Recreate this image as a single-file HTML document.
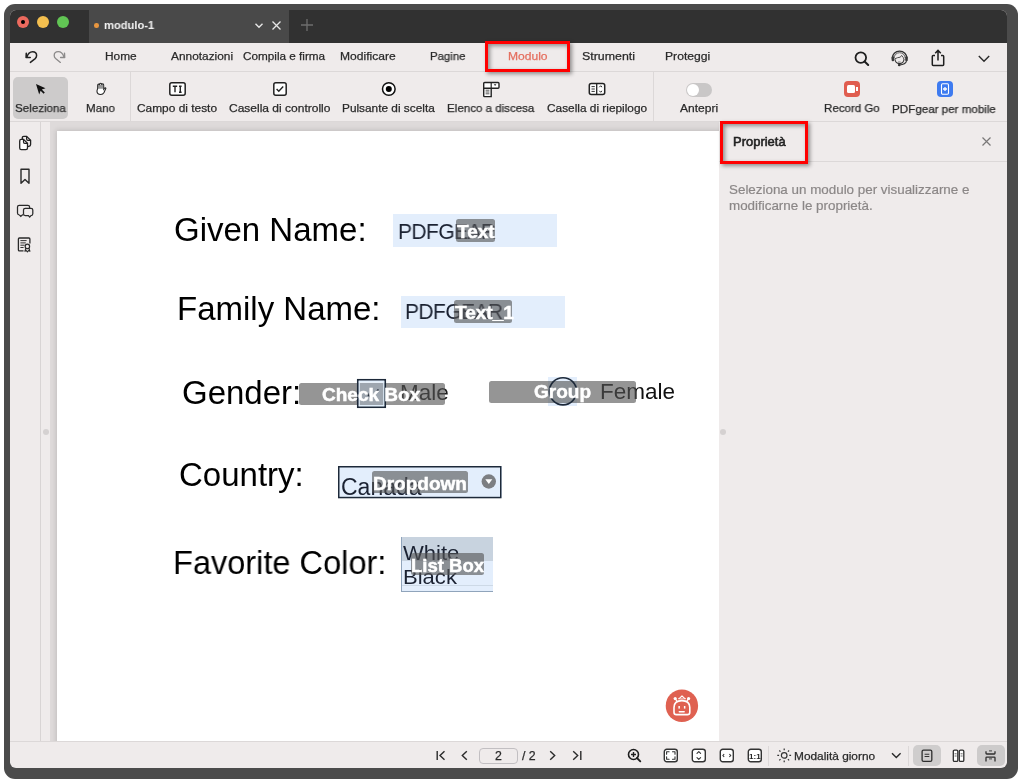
<!DOCTYPE html>
<html><head><meta charset="utf-8">
<style>
html,body{margin:0;padding:0;}
body{width:1018px;height:779px;overflow:hidden;background:#fff;position:relative;font-family:"Liberation Sans",sans-serif;}
.a{position:absolute;}
.t{position:absolute;white-space:nowrap;line-height:1;will-change:transform;transform-origin:0 0;}
svg{position:absolute;overflow:visible;will-change:transform;}
.ui{font-size:11.7px;color:#2a2a2a;-webkit-text-stroke-width:0.25px;}
.pg{font-size:33px;color:#000;}
.fv{font-size:22px;color:#1b2232;letter-spacing:-0.6px;transform:scale(0.955,1.0);}
.tag{position:absolute;background:rgba(84,84,84,0.62);border-radius:2.5px;}
.tagt{position:absolute;white-space:nowrap;line-height:1;will-change:transform;font-size:19px;font-weight:bold;color:#fff;-webkit-text-stroke:0.5px #fff;}
</style></head><body>
<!-- frame -->
<div class="a" style="left:4px;top:4px;width:1014px;height:775px;background:#4b4b4b;border-radius:11px;"></div>
<!-- window -->
<div class="a" style="left:10px;top:10px;width:997px;height:758px;background:#efebeb;border-radius:6px;overflow:hidden;">
  <div class="a" style="left:0;top:0;width:997px;height:33px;background:#313131;"></div>
  <div class="a" style="left:79px;top:0;width:200px;height:33px;background:#494949;"></div>
</div>

<!-- traffic lights -->
<div class="a" style="left:17px;top:16px;width:12px;height:12px;border-radius:50%;background:#ec6a5e;"></div>
<div class="a" style="left:21px;top:20px;width:4px;height:4px;border-radius:50%;background:#000;"></div>
<div class="a" style="left:37px;top:16px;width:12px;height:12px;border-radius:50%;background:#f4bf4f;"></div>
<div class="a" style="left:57px;top:16px;width:12px;height:12px;border-radius:50%;background:#61c554;"></div>

<!-- tab -->
<div class="a" style="left:94.2px;top:23.4px;width:4.6px;height:4.6px;border-radius:50%;background:#e8963f;"></div>
<div class="t" style="left:103.5px;top:19.5px;font-size:11.5px;font-weight:bold;color:#f2f2f2;transform:scaleX(0.97);">modulo-1</div>
<svg style="left:255px;top:23px" width="8" height="6"><path d="M0.5 0.8 L4 4.3 L7.5 0.8" fill="none" stroke="#e6e6e6" stroke-width="1.4"/></svg>
<svg style="left:272px;top:21.3px" width="9" height="9"><path d="M0.5 0.5 L8.5 8.5 M8.5 0.5 L0.5 8.5" fill="none" stroke="#e6e6e6" stroke-width="1.3"/></svg>
<svg style="left:301px;top:19px" width="12" height="12"><path d="M6 0 V12 M0 6 H12" fill="none" stroke="#6e6e6e" stroke-width="1.3"/></svg>

<!-- menu bar -->
<div class="a" style="left:10px;top:71px;width:997px;height:1px;background:#dcd8d8;"></div>
<svg style="left:20px;top:46px" width="50" height="22"><path d="M6.8 11.2 Q8.5 5.7 12.6 5.7 Q16.6 5.7 16.6 9.6 Q16.6 11.4 15.2 12.6 L10.4 16.4" fill="none" stroke="#222" stroke-width="1.5" stroke-linecap="round"/><path d="M6.3 7.2 L6.1 11.5 L10.2 11.5" fill="none" stroke="#222" stroke-width="1.6" stroke-linecap="round" stroke-linejoin="round"/>
<path d="M44 11.2 Q42.3 5.7 38.2 5.7 Q34.2 5.7 34.2 9.6 Q34.2 11.4 35.6 12.6 L40.4 16.4" fill="none" stroke="#8c8a8a" stroke-width="1.3" stroke-linecap="round"/><path d="M44.5 7.2 L44.7 11.5 L40.6 11.5" fill="none" stroke="#8c8a8a" stroke-width="1.4" stroke-linecap="round" stroke-linejoin="round"/></svg>
<div class="t ui" style="left:104.7px;top:49.9px;transform:scaleX(1.0167);">Home</div>
<div class="t ui" style="left:170.5px;top:49.9px;transform:scaleX(1.0167);">Annotazioni</div>
<div class="t ui" style="left:243.0px;top:49.9px;transform:scaleX(1.0037);">Compila e firma</div>
<div class="t ui" style="left:339.6px;top:49.9px;transform:scaleX(1.032);">Modificare</div>
<div class="t ui" style="left:429.7px;top:49.9px;transform:scaleX(0.974);">Pagine</div>
<div class="t ui" style="left:507.7px;top:49.9px;transform:scaleX(1.032);color:#e46f5f;">Modulo</div>
<div class="t ui" style="left:581.6px;top:49.9px;transform:scaleX(1.06);">Strumenti</div>
<div class="t ui" style="left:664.9px;top:49.9px;transform:scaleX(1.038);">Proteggi</div>

<!-- menu right icons -->
<svg style="left:854px;top:51px" width="16" height="16"><circle cx="6.8" cy="6.6" r="5.3" fill="none" stroke="#1e1e1e" stroke-width="1.8"/><path d="M10.6 10.5 L14.2 14" stroke="#1e1e1e" stroke-width="2" stroke-linecap="round"/></svg>
<svg style="left:885px;top:46px" width="30" height="24"><path d="M7.2 12.5 A7.4 7.4 0 0 1 22 12.5" fill="none" stroke="#333" stroke-width="1.4"/><path d="M9 12.3 A5.6 5.6 0 0 1 20.2 12.3" fill="none" stroke="#555" stroke-width="0.9"/><rect x="6.6" y="10.3" width="2.6" height="5" rx="1.2" fill="#3a3a3a"/><rect x="20.2" y="10.3" width="2.6" height="5" rx="1.2" fill="#3a3a3a"/><path d="M10 13.3 Q10.3 17.6 14.5 17.6 Q18.7 17.6 19 13.3" fill="none" stroke="#333" stroke-width="1.1"/><path d="M9.8 12.8 Q12.5 11.4 15.3 11.2 L16.6 9.4 Q18.6 11.2 19 13.5" fill="none" stroke="#444" stroke-width="0.9"/><path d="M21.5 15.2 Q20.5 18.6 14.6 19" fill="none" stroke="#333" stroke-width="1.1"/><circle cx="14.2" cy="19" r="1.3" fill="#333"/><path d="M13 16 H15.6" stroke="#666" stroke-width="0.8"/></svg>
<svg style="left:931px;top:49px" width="14" height="18"><path d="M4 6.5 H2.2 Q1.3 6.5 1.3 7.5 V15.5 Q1.3 16.5 2.2 16.5 H11.8 Q12.7 16.5 12.7 15.5 V7.5 Q12.7 6.5 11.8 6.5 H10" fill="none" stroke="#1e1e1e" stroke-width="1.5"/><path d="M7 11.5 V1.5 M4.2 4.2 L7 1.4 L9.8 4.2" fill="none" stroke="#1e1e1e" stroke-width="1.5"/></svg>
<svg style="left:978px;top:55px" width="12" height="8"><path d="M0.8 1 L6 6.3 L11.2 1" fill="none" stroke="#2a2a2a" stroke-width="1.4"/></svg>

<!-- toolbar -->
<div class="a" style="left:10px;top:121px;width:997px;height:1px;background:#dcd8d8;"></div>
<div class="a" style="left:13px;top:77px;width:55px;height:42px;background:#cdcbcb;border-radius:5px;"></div>
<div class="a" style="left:130px;top:72px;width:1px;height:49px;background:#dcd8d8;"></div>
<div class="a" style="left:653px;top:72px;width:1px;height:49px;background:#dcd8d8;"></div>

<!-- cursor -->
<svg style="left:35px;top:83px" width="12" height="13"><path d="M1 1 L10.5 5.2 L6.8 6.6 L9.8 9.6 L8.6 10.8 L5.6 7.8 L4.2 11.4 Z" fill="#111"/></svg>
<!-- hand -->
<svg style="left:95.3px;top:82.4px" width="11.5" height="13.5" viewBox="0 0 13 15"><path d="M3 7 V3.5 Q3 2.3 4.2 2.3 Q5.2 2.3 5.2 3.5 V2.4 Q5.2 1.2 6.4 1.2 Q7.5 1.2 7.5 2.4 V3.2 Q7.5 2 8.7 2 Q9.8 2 9.8 3.2 V8 L10.8 6.8 Q11.8 6 12.3 7 L10.2 11.8 Q9 14 6.5 14 Q2.2 14 2.2 10 Z" fill="#fff" stroke="#222" stroke-width="1.2"/><path d="M3.2 3 H9.6 V7.5 H3.2Z" fill="#6a6a6a" opacity="0.7"/></svg>
<!-- TI -->
<svg style="left:169px;top:82px" width="17" height="14"><rect x="0.8" y="0.8" width="15.4" height="12.4" rx="2" fill="#fff" stroke="#222" stroke-width="1.5"/><path d="M3.8 4.2 H8.2 M6 4.2 V10.2 M10 4.2 H12.6 M11.3 4.2 V10.2 M10 10.2 H12.6" stroke="#222" stroke-width="1.4"/></svg>
<!-- checkbox -->
<svg style="left:273px;top:82px" width="14" height="14"><rect x="0.8" y="0.8" width="12.4" height="12.4" rx="2" fill="#fff" stroke="#222" stroke-width="1.5"/><path d="M3.6 7 L5.8 9.2 L10.2 4.6" fill="none" stroke="#222" stroke-width="1.4"/></svg>
<!-- radio -->
<svg style="left:381px;top:81px" width="16" height="16"><circle cx="7.8" cy="8" r="6.3" fill="#fff" stroke="#111" stroke-width="1.5"/><circle cx="7.8" cy="8" r="3" fill="#000"/></svg>
<!-- dropdown -->
<svg style="left:482px;top:81px" width="18" height="17"><path d="M1.7 7.2 V14.8 Q1.7 15.6 2.5 15.6 H9.2 V7.2 Z" fill="#fff" stroke="#222" stroke-width="1.4"/><rect x="1.7" y="1.5" width="15.3" height="5.7" rx="1" fill="#fff" stroke="#222" stroke-width="1.4"/><path d="M9.2 1.5 V7.2" stroke="#222" stroke-width="1.2"/><path d="M11.8 3.3 H14.4 L13.1 5 Z" fill="#222"/><path d="M3.6 9.2 H7.4 M3.6 11 H7.4 M3.6 12.8 H7.4" stroke="#444" stroke-width="0.9"/></svg>
<!-- listbox -->
<svg style="left:588px;top:82px" width="18" height="14"><rect x="1.3" y="1.5" width="15.4" height="11" rx="2" fill="#fff" stroke="#222" stroke-width="1.5"/><path d="M8.7 1.5 V12.5" stroke="#222" stroke-width="1.3"/><path d="M3.5 4.6 H6.8 M3.5 7 H6.8 M3.5 9.4 H6.8" stroke="#333" stroke-width="1"/><path d="M11.3 5.2 L12.7 3.8 L14.1 5.2 M11.3 8.8 L12.7 10.2 L14.1 8.8" fill="none" stroke="#222" stroke-width="1"/></svg>
<!-- toggle -->
<div class="a" style="left:686px;top:83px;width:26px;height:14px;border-radius:7px;background:#c9c7c7;"></div>
<div class="a" style="left:687px;top:84px;width:12px;height:12px;border-radius:50%;background:#fff;"></div>
<!-- record go -->
<div class="a" style="left:844px;top:81px;width:16px;height:16px;border-radius:4px;background:#e05d4f;"></div>
<div class="a" style="left:847px;top:85px;width:8px;height:8px;border-radius:1.5px;background:#fff;"></div>
<div class="a" style="left:856px;top:87px;width:2px;height:4px;background:#fff;"></div>
<!-- pdfgear mobile -->
<div class="a" style="left:937px;top:81px;width:16px;height:16px;border-radius:4px;background:#3e7bf0;"></div>
<svg style="left:940px;top:83px" width="10" height="12"><rect x="1.5" y="0.8" width="7" height="10.4" rx="1.2" fill="none" stroke="#fff" stroke-width="1.1"/><path d="M5 4 V8 M3 6 H7" stroke="#fff" stroke-width="1.3"/></svg>

<div class="t ui" style="left:14.7px;top:102px;transform:scaleX(0.99);">Seleziona</div>
<div class="t ui" style="left:86.3px;top:102px;transform:scaleX(0.99);">Mano</div>
<div class="t ui" style="left:136.8px;top:102px;transform:scaleX(1.018);">Campo di testo</div>
<div class="t ui" style="left:229.0px;top:102px;transform:scaleX(1.027);">Casella di controllo</div>
<div class="t ui" style="left:341.8px;top:102px;transform:scaleX(1.013);">Pulsante di scelta</div>
<div class="t ui" style="left:447.0px;top:102px;transform:scaleX(0.989);">Elenco a discesa</div>
<div class="t ui" style="left:546.8px;top:102px;transform:scaleX(1.014);">Casella di riepilogo</div>
<div class="t ui" style="left:680.3px;top:102px;transform:scaleX(1.03);">Antepri</div>
<div class="t ui" style="left:823.8px;top:101.6px;transform:scaleX(0.986);">Record Go</div>
<div class="t ui" style="left:892.2px;top:102.6px;transform:scaleX(0.993);">PDFgear per mobile</div>

<!-- content area -->
<div class="a" style="left:40px;top:122px;width:1px;height:620px;background:#d8d4d4;"></div>
<div class="a" style="left:50px;top:122px;width:669px;height:620px;background:#dedada;overflow:hidden;"><div class="a" style="left:7px;top:9px;width:700px;height:700px;background:#fff;box-shadow:0 0 5px 1px rgba(0,0,0,0.13);"></div></div>
<div class="a" style="left:43px;top:429px;width:6px;height:6px;border-radius:50%;background:#d5d1d1;"></div>
<div class="a" style="left:720px;top:429px;width:6px;height:6px;border-radius:50%;background:#d5d1d1;"></div>

<!-- sidebar icons -->
<svg style="left:12px;top:132px" width="26" height="24"><path d="M10.3 7.3 V5.8 Q10.3 4.3 11.8 4.3 H14.6 L18.6 8.3 V12.6 Q18.6 14.3 16.9 14.3 H15.6" fill="none" stroke="#222" stroke-width="1.3"/><path d="M14.6 4.3 V7 Q14.6 8.3 15.9 8.3 H18.6" fill="none" stroke="#222" stroke-width="1.2"/><path d="M9.2 7.3 H11.5 L15.5 11.3 V16 Q15.5 17.6 13.9 17.6 H9.3 Q7.7 17.6 7.7 16 V8.9 Q7.7 7.3 9.2 7.3 Z" fill="#fff" stroke="#222" stroke-width="1.3"/><path d="M11.5 7.3 V10 Q11.5 11.3 12.8 11.3 H15.5" fill="none" stroke="#222" stroke-width="1.2"/></svg>
<svg style="left:19px;top:168px" width="12" height="17"><path d="M2 1.3 H10 V15.3 L6 11.5 L2 15.3 Z" fill="none" stroke="#2a2a2a" stroke-width="1.4" stroke-linejoin="round"/></svg>
<svg style="left:12px;top:196px" width="26" height="26"><path d="M7.3 18.8 Q5.5 18.8 5.5 17 V11.1 Q5.5 9.3 7.3 9.3 H15.8 Q17.6 9.3 17.6 11.1 V12.2" fill="none" stroke="#2a2a2a" stroke-width="1.25"/><path d="M7.3 18.8 L8.8 20.4 L10.4 18.8 H11.4" fill="none" stroke="#2a2a2a" stroke-width="1.2"/><path d="M13.3 12.3 H19 Q20.8 12.3 20.8 14.1 V17.8 Q20.8 19.6 19 19.6 L17.7 21.1 L16.4 19.6 H13.3 Q11.5 19.6 11.5 17.8 V14.1 Q11.5 12.3 13.3 12.3 Z" fill="#efebeb" stroke="#2a2a2a" stroke-width="1.25"/></svg>
<svg style="left:12px;top:232px" width="26" height="24"><path d="M11.5 18.9 H7.4 Q6.4 18.9 6.4 17.9 V7 Q6.4 6 7.4 6 H16.9 Q17.9 6 17.9 7 V11.5" fill="none" stroke="#2a2a2a" stroke-width="1.3"/><path d="M8.4 8.6 H14.6 M8.4 10.9 H13.8 M8.4 13.2 H12.6 M8.4 15.5 H11.6" stroke="#333" stroke-width="1"/><circle cx="15.4" cy="14.4" r="2.2" fill="none" stroke="#2a2a2a" stroke-width="1.2"/><path d="M13.9 16.2 L12.9 19.2 L14.3 18.6 L15.4 19.8 L16.5 18.6 L17.9 19.2 L16.9 16.2" fill="none" stroke="#2a2a2a" stroke-width="1.1" stroke-linejoin="round"/></svg>

<!-- page content -->
<div class="t pg" style="left:174px;top:212.7px;">Given Name:</div>
<div class="t pg" style="left:176.6px;top:292.3px;">Family Name:</div>
<div class="t pg" style="left:182px;top:376px;">Gender:</div>
<div class="t pg" style="left:179px;top:457.6px;">Country:</div>
<div class="t pg" style="left:173.4px;top:545.6px;transform:scaleX(0.986);">Favorite Color:</div>

<!-- text fields -->
<div class="a" style="left:393px;top:214px;width:164px;height:33px;background:#e3eefc;"></div>
<div class="t fv" style="left:397.5px;top:220.6px;">PDFGEAR</div>
<div class="tag" style="left:456px;top:219px;width:39px;height:23px;"></div>
<div class="tagt" style="left:457px;top:222.2px;">Text</div>

<div class="a" style="left:401px;top:296px;width:164px;height:32px;background:#e3eefc;"></div>
<div class="t fv" style="left:405px;top:301px;">PDFGEAR</div>
<div class="tag" style="left:454px;top:300px;width:58px;height:23px;"></div>
<div class="tagt" style="left:455px;top:303px;">Text_1</div>

<!-- gender -->
<div class="t" style="left:399.5px;top:382.3px;font-size:22.5px;color:#1c1c1c;">Male</div>
<div class="tag" style="left:299px;top:383px;width:146px;height:22px;"></div>
<svg style="left:356px;top:378px" width="31" height="31"><rect x="1.8" y="1.8" width="27.4" height="27.4" fill="rgba(180,205,235,0.3)" stroke="#1d2939" stroke-width="1.7"/><rect x="3.3" y="3.3" width="24.4" height="24.4" fill="none" stroke="rgba(225,238,252,0.85)" stroke-width="1.2"/><path d="M11 15.5 L15 19.5 L22.5 11.5" fill="none" stroke="#2a3340" stroke-width="1.8"/></svg>
<div class="tagt" style="left:321.5px;top:384.8px;">Check Box</div>

<div class="a" style="left:548px;top:377px;width:29px;height:29px;background:rgba(200,222,250,0.5);"></div>
<div class="t" style="left:599.5px;top:381.2px;font-size:22.5px;color:#111;">Female</div>
<div class="tag" style="left:489px;top:380.5px;width:147px;height:22.5px;"></div>
<svg style="left:548px;top:377px" width="30" height="30"><circle cx="15" cy="14.3" r="13.6" fill="none" stroke="#1d2939" stroke-width="1.6"/></svg>
<div class="tagt" style="left:534px;top:381.6px;">Group</div>

<!-- dropdown -->
<div class="a" style="left:338px;top:465.5px;width:163.5px;height:32.3px;background:#e3eefc;overflow:hidden;">
  <div class="t" style="left:3.3px;top:10.7px;font-size:23px;color:#1b2232;">Canada</div>
</div>
<svg style="left:338px;top:465.5px" width="164" height="33"><rect x="0.75" y="0.75" width="162" height="30.8" fill="none" stroke="#1d2939" stroke-width="1.5"/></svg>
<div class="tag" style="left:372px;top:470.5px;width:96px;height:22.5px;"></div>
<div class="tagt" style="left:372.5px;top:473.5px;">Dropdown</div>
<svg style="left:481px;top:474px" width="16" height="16"><circle cx="7.8" cy="7.5" r="7.2" fill="#7c7e82"/><path d="M4.3 5.3 H11.3 L7.8 10 Z" fill="#fff"/></svg>

<!-- list box -->
<div class="a" style="left:401px;top:537px;width:92px;height:55px;background:#e3eefc;border-left:1px solid #90a4bb;border-bottom:1px solid #90a4bb;box-sizing:border-box;"></div>
<div class="a" style="left:402px;top:537px;width:91px;height:24px;background:#c8d3df;"></div>
<div class="a" style="left:402px;top:585px;width:91px;height:1px;background:#cdd9e6;"></div>
<div class="t" style="left:403px;top:541.5px;font-size:21px;color:#1b2232;transform:scaleX(1.05);">White</div>
<div class="t" style="left:403px;top:566.2px;font-size:21px;color:#1b2232;transform:scaleX(1.05);">Black</div>
<div class="tag" style="left:411px;top:553.3px;width:73px;height:22px;"></div>
<div class="tagt" style="left:411px;top:557.2px;font-size:18.5px;">List Box</div>

<!-- robot -->
<svg style="left:665px;top:689px" width="34" height="34"><circle cx="16.9" cy="16.8" r="16.2" fill="#df6151"/><path d="M9 18.5 Q9 11.6 16.9 11.6 Q24.8 11.6 24.8 18.5 V23.2 Q24.8 25.6 22.4 25.6 H11.4 Q9 25.6 9 23.2 Z" fill="none" stroke="#fff" stroke-width="1.6"/><circle cx="10.2" cy="9.6" r="1.6" fill="#fff"/><circle cx="23.6" cy="9.6" r="1.6" fill="#fff"/><path d="M10.6 10 L12.2 12.6 M23.2 10 L21.6 12.6" stroke="#fff" stroke-width="1.2"/><path d="M13.4 10 L15.2 8.6 L17 7 L18.8 8.6 L20.6 10" fill="none" stroke="#fff" stroke-width="1.2" stroke-linejoin="round"/><path d="M14.2 9.9 H19.8" stroke="#fff" stroke-width="0.8"/><rect x="13.4" y="17" width="1.5" height="2.6" fill="#fff"/><rect x="18.9" y="17" width="1.5" height="2.6" fill="#fff"/><path d="M14.3 22.7 H19.2" stroke="#fff" stroke-width="1.4" stroke-linecap="round"/></svg>

<!-- right panel -->
<div class="a" style="left:719px;top:161px;width:288px;height:1px;background:#dcd8d8;"></div>
<div class="t" style="left:733px;top:135.5px;font-size:12.6px;color:#222;-webkit-text-stroke:0.55px #222;transform:scaleX(1.03);">Proprietà</div>
<svg style="left:982px;top:137px" width="9" height="9"><path d="M0.5 0.5 L8.5 8.5 M8.5 0.5 L0.5 8.5" fill="none" stroke="#7a7878" stroke-width="1.2"/></svg>
<div class="t" style="left:729.3px;top:182px;font-size:13.4px;color:#8b8787;line-height:16px;-webkit-text-stroke:0.2px #8b8787;">Seleziona un modulo per visualizzarne e<br>modificarne le proprietà.</div>

<!-- bottom bar -->
<div class="a" style="left:10px;top:741px;width:997px;height:1px;background:#dcd8d8;"></div>
<svg style="left:436px;top:750px" width="10" height="11"><path d="M1.2 1 V10" stroke="#2a2a2a" stroke-width="1.4"/><path d="M8.5 1.2 L4 5.5 L8.5 9.8" fill="none" stroke="#2a2a2a" stroke-width="1.4"/></svg>
<svg style="left:460px;top:750px" width="8" height="11"><path d="M6.8 1.2 L2.3 5.5 L6.8 9.8" fill="none" stroke="#2a2a2a" stroke-width="1.4"/></svg>
<div class="a" style="left:479px;top:747.5px;width:39px;height:16px;border:1px solid #c2bfc2;border-radius:4px;box-sizing:border-box;"></div>
<div class="t ui" style="left:494.8px;top:749.5px;font-size:12.3px;">2</div>
<div class="t ui" style="left:521.5px;top:749.5px;font-size:12.3px;">/ 2</div>
<svg style="left:549px;top:750px" width="8" height="11"><path d="M1.2 1.2 L5.7 5.5 L1.2 9.8" fill="none" stroke="#2a2a2a" stroke-width="1.4"/></svg>
<svg style="left:572px;top:750px" width="10" height="11"><path d="M1.2 1.2 L5.7 5.5 L1.2 9.8" fill="none" stroke="#2a2a2a" stroke-width="1.4"/><path d="M8.8 1 V10" stroke="#2a2a2a" stroke-width="1.4"/></svg>
<svg style="left:627px;top:748px" width="15" height="15"><circle cx="6.5" cy="6.5" r="5" fill="none" stroke="#1e1e1e" stroke-width="1.6"/><path d="M10 10 L13.3 13.3" stroke="#1e1e1e" stroke-width="1.8" stroke-linecap="round"/><path d="M6.5 4 V9 M4 6.5 H9" stroke="#1e1e1e" stroke-width="1.4"/></svg>
<svg style="left:663px;top:748px" width="16" height="15"><rect x="1.3" y="1.3" width="13" height="12.4" rx="2.5" fill="#fff" stroke="#333" stroke-width="1.4"/><path d="M3.6 6.3 V3.8 H6.1 M9.5 3.8 H12 V6.3 M12 8.7 V11.2 H9.5 M6.1 11.2 H3.6 V8.7" fill="none" stroke="#333" stroke-width="1.1" stroke-linecap="round" stroke-linejoin="round"/></svg>
<svg style="left:691px;top:748px" width="16" height="15"><rect x="1.3" y="1.3" width="13" height="12.4" rx="2.5" fill="#fff" stroke="#333" stroke-width="1.4"/><path d="M6 5.3 L7.8 3.6 L9.6 5.3 M6 9.7 L7.8 11.4 L9.6 9.7" fill="none" stroke="#333" stroke-width="1.1" stroke-linecap="round" stroke-linejoin="round"/></svg>
<svg style="left:719px;top:748px" width="16" height="15"><rect x="1.3" y="1.3" width="13" height="12.4" rx="2.5" fill="#fff" stroke="#333" stroke-width="1.4"/><path d="M5.2 6 L3.9 7.5 L5.2 9 M10.4 6 L11.7 7.5 L10.4 9" fill="none" stroke="#333" stroke-width="1.1"/></svg>
<svg style="left:747px;top:748px" width="16" height="15"><rect x="1.3" y="1.3" width="13" height="12.4" rx="2.5" fill="#fff" stroke="#333" stroke-width="1.4"/><text x="7.8" y="10.8" font-size="8" font-weight="bold" font-family="Liberation Sans" text-anchor="middle" fill="#222">1:1</text></svg>
<div class="a" style="left:768px;top:746px;width:1px;height:20px;background:#dcd8d8;"></div>
<svg style="left:777px;top:748px" width="15" height="15"><circle cx="7.2" cy="7.4" r="2.8" fill="none" stroke="#333" stroke-width="1.2"/><path d="M7.2 0.5 V2.3 M7.2 12.5 V14.3 M0.3 7.4 H2.1 M12.3 7.4 H14.1 M2.3 2.5 L3.5 3.7 M10.9 11.1 L12.1 12.3 M2.3 12.3 L3.5 11.1 M10.9 3.7 L12.1 2.5" stroke="#333" stroke-width="1.2"/></svg>
<div class="t ui" style="left:793.8px;top:749.7px;transform:scaleX(1.015);">Modalità giorno</div>
<svg style="left:891px;top:752px" width="11" height="8"><path d="M1 1.3 L5.3 5.6 L9.6 1.3" fill="none" stroke="#2a2a2a" stroke-width="1.4"/></svg>
<div class="a" style="left:908px;top:746px;width:1px;height:20px;background:#dcd8d8;"></div>
<div class="a" style="left:913px;top:745px;width:28px;height:21px;background:#cfcdcd;border-radius:5px;"></div>
<svg style="left:920px;top:748px" width="14" height="15"><rect x="2.1" y="2.1" width="9.7" height="11.3" rx="1.4" fill="none" stroke="#2e2e2e" stroke-width="1.3"/><path d="M4.6 6.2 H9.3 M4.6 8.5 H9.3" stroke="#333" stroke-width="1.1"/></svg>
<svg style="left:950px;top:748px" width="16" height="15"><rect x="3.3" y="2.1" width="4.5" height="11.3" rx="1.2" fill="#fff" stroke="#2e2e2e" stroke-width="1.3"/><rect x="9.3" y="2.1" width="4.5" height="11.3" rx="1.2" fill="#fff" stroke="#2e2e2e" stroke-width="1.3"/><path d="M4.6 5.8 H6.6 M4.6 8 H6.6 M10.6 5.8 H12.6 M10.6 8 H12.6" stroke="#555" stroke-width="0.9"/></svg>
<div class="a" style="left:977px;top:745px;width:28px;height:21px;background:#cdcbcb;border-radius:5px;"></div>
<svg style="left:984px;top:748px" width="14" height="15"><path d="M2 3.2 V5.3 Q2 6 2.8 6 H10.2 Q11 6 11 5.3 V3.2 M2 13.6 V9.8 Q2 9.1 2.8 9.1 H10.2 Q11 9.1 11 9.8 V13.6" fill="none" stroke="#2e2e2e" stroke-width="1.3"/><path d="M5 2.9 H8 M5 10.9 H8" stroke="#444" stroke-width="1"/></svg>

<!-- red highlight boxes -->
<div class="a" style="left:485px;top:41px;width:79px;height:25px;border:3px solid #f00;box-shadow:2px 2px 4px rgba(0,0,0,0.4), inset 2px 2px 4px rgba(0,0,0,0.4);"></div>
<div class="a" style="left:720px;top:121px;width:82px;height:37px;border:3px solid #f00;box-shadow:2px 2px 4px rgba(0,0,0,0.4), inset 2px 2px 4px rgba(0,0,0,0.4);"></div>
</body></html>
